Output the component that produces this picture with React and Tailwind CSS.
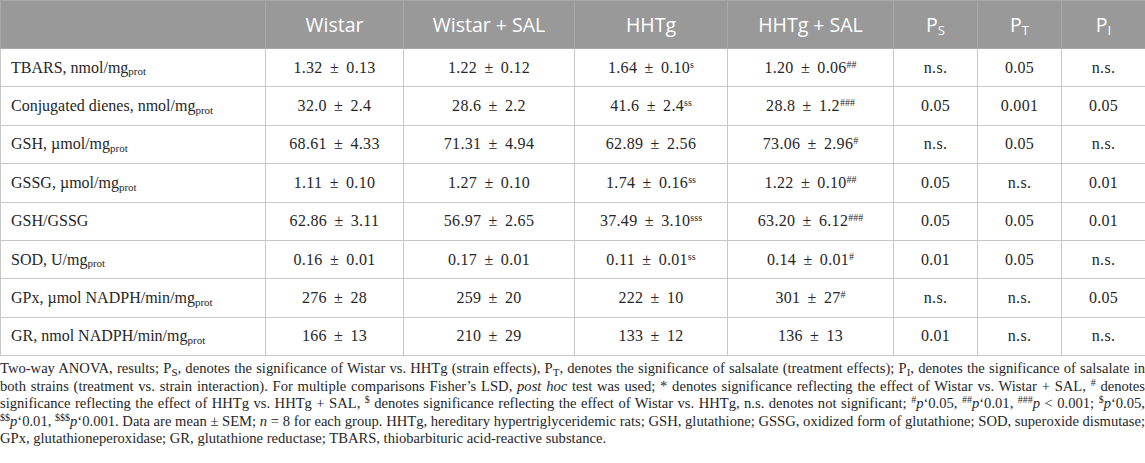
import React from "react";

const cols = [265, 138, 171, 153, 166, 84, 84, 84];

const Sub = ({ children }) => <sub className="text-[11px] tracking-normal">{children}</sub>;
const Sup = ({ children }) => <sup className="text-[10px] tracking-normal">{children}</sup>;

const rows = [
  [<>TBARS, nmol/mg<Sub>prot</Sub></>, "1.32 ± 0.13", "1.22 ± 0.12", <>1.64 ± 0.10<Sup>s</Sup></>, <>1.20 ± 0.06<Sup>##</Sup></>, "n.s.", "0.05", "n.s."],
  [<>Conjugated dienes, nmol/mg<Sub>prot</Sub></>, "32.0 ± 2.4", "28.6 ± 2.2", <>41.6 ± 2.4<Sup>ss</Sup></>, <>28.8 ± 1.2<Sup>###</Sup></>, "0.05", "0.001", "0.05"],
  [<>GSH, µmol/mg<Sub>prot</Sub></>, "68.61 ± 4.33", "71.31 ± 4.94", "62.89 ± 2.56", <>73.06 ± 2.96<Sup>#</Sup></>, "n.s.", "0.05", "n.s."],
  [<>GSSG, µmol/mg<Sub>prot</Sub></>, "1.11 ± 0.10", "1.27 ± 0.10", <>1.74 ± 0.16<Sup>ss</Sup></>, <>1.22 ± 0.10<Sup>##</Sup></>, "0.05", "n.s.", "0.01"],
  ["GSH/GSSG", "62.86 ± 3.11", "56.97 ± 2.65", <>37.49 ± 3.10<Sup>sss</Sup></>, <>63.20 ± 6.12<Sup>###</Sup></>, "0.05", "0.05", "0.01"],
  [<>SOD, U/mg<Sub>prot</Sub></>, "0.16 ± 0.01", "0.17 ± 0.01", <>0.11 ± 0.01<Sup>ss</Sup></>, <>0.14 ± 0.01<Sup>#</Sup></>, "0.01", "0.05", "n.s."],
  [<>GPx, µmol NADPH/min/mg<Sub>prot</Sub></>, "276 ± 28", "259 ± 20", "222 ± 10", <>301 ± 27<Sup>#</Sup></>, "n.s.", "n.s.", "0.05"],
  [<>GR, nmol NADPH/min/mg<Sub>prot</Sub></>, "166 ± 13", "210 ± 29", "133 ± 12", "136 ± 13", "0.01", "n.s.", "n.s."],
];

const HSub = ({ children }) => <sub className="text-[13px]">{children}</sub>;

export default function App() {
  return (
    <div className="w-[1145px] h-[463px] bg-white overflow-hidden font-['Liberation_Serif',serif] text-[#262626]">
      <table className="w-[1145px] table-fixed border-collapse">
        <colgroup>
          {cols.map((w, i) => (
            <col key={i} style={{ width: w }} />
          ))}
        </colgroup>
        <thead>
          <tr className="h-[48px] bg-[#999999] text-white">
            <th className="border border-[#a8a8a8]"></th>
            {["Wistar", "Wistar + SAL", "HHTg", "HHTg + SAL"].map((h) => (
              <th key={h} className="border border-[#a8a8a8] font-normal font-['Open_Sans',sans-serif] text-[19.5px]">
                {h}
              </th>
            ))}
            {["S", "T", "I"].map((s) => (
              <th key={s} className="border border-[#a8a8a8] font-normal font-['Open_Sans',sans-serif] text-[19.5px]">
                P<HSub>{s}</HSub>
              </th>
            ))}
          </tr>
        </thead>
        <tbody>
          {rows.map((r, i) => (
            <tr key={i} className="h-[38.4px]">
              {r.map((c, j) => (
                <td
                  key={j}
                  className={
                    j === 0
                      ? "border border-[#c8c8c8] font-['Liberation_Serif',serif] text-[16px] text-left pl-[10px]"
                      : "border border-[#c8c8c8] font-['Liberation_Serif',serif] text-[16px] text-center tracking-[0.3px] [word-spacing:3px]"
                  }
                >
                  {c}
                </td>
              ))}
            </tr>
          ))}
        </tbody>
      </table>
      <p className="mt-[4px] font-['Liberation_Serif',serif] text-[14.6px] leading-[17.5px] text-justify">
        Two-way ANOVA, results; P<Sub>S</Sub>, denotes the significance of Wistar vs. HHTg (strain effects), P<Sub>T</Sub>, denotes the significance of salsalate (treatment effects); P<Sub>I</Sub>, denotes the significance of salsalate in both strains (treatment vs. strain interaction). For multiple comparisons Fisher’s LSD, <i>post hoc</i> test was used; * denotes significance reflecting the effect of Wistar vs. Wistar + SAL, <Sup>#</Sup> denotes significance reflecting the effect of HHTg vs. HHTg + SAL, <Sup>$</Sup> denotes significance reflecting the effect of Wistar vs. HHTg, n.s. denotes not significant; <Sup>#</Sup><i>p</i>‘0.05, <Sup>##</Sup><i>p</i>‘0.01, <Sup>###</Sup><i>p</i> &lt; 0.001; <Sup>$</Sup><i>p</i>‘0.05, <Sup>$$</Sup><i>p</i>‘0.01, <Sup>$$$</Sup><i>p</i>‘0.001. Data are mean ± SEM; <i>n</i> = 8 for each group. HHTg, hereditary hypertriglyceridemic rats; GSH, glutathione; GSSG, oxidized form of glutathione; SOD, superoxide dismutase; GPx, glutathioneperoxidase; GR, glutathione reductase; TBARS, thiobarbituric acid-reactive substance.
      </p>
    </div>
  );
}
